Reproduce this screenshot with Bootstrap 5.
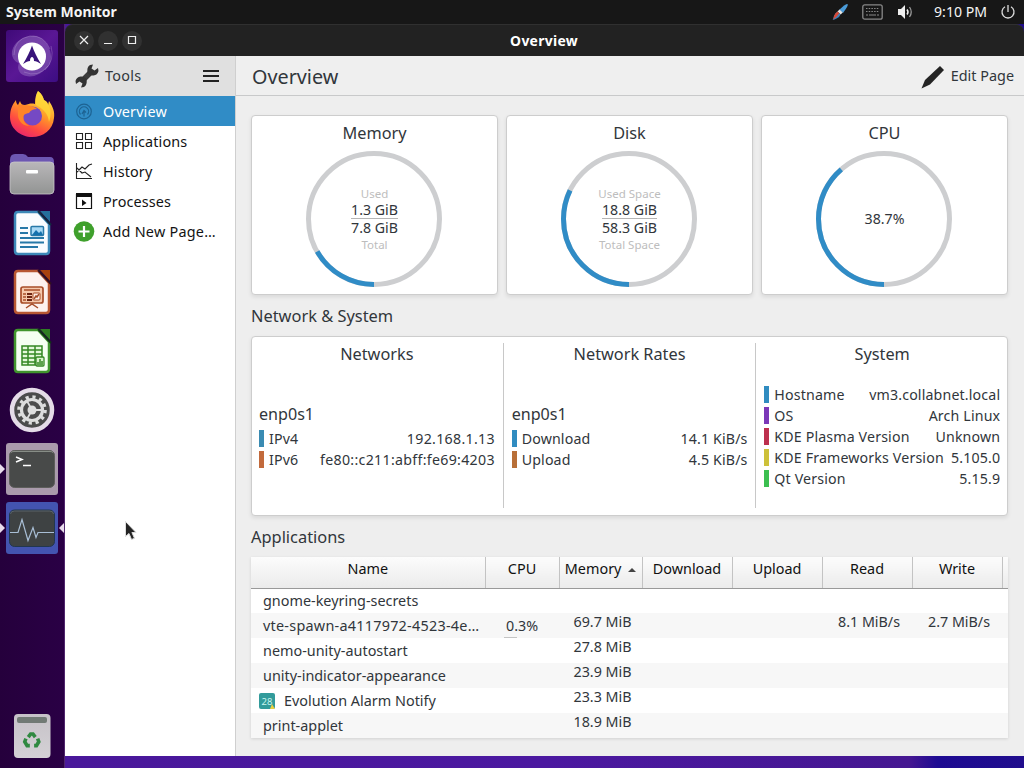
<!DOCTYPE html>
<html lang="en">
<head>
  <meta charset="UTF-8">
  <meta name="viewport" content="width=device-width, initial-scale=1.0">
  <title>System Monitor</title>
  <link href="https://cdn.jsdelivr.net/npm/bootstrap@5.3.3/dist/css/bootstrap.min.css" rel="stylesheet">
  <style>
    body {
      width: 1024px;
      height: 768px;
      overflow: hidden;
      background: #28003f;
      color: #31363b;
      font-family: "Noto Sans", "Open Sans", sans-serif;
      font-size: 14.4px;
      line-height: 20px;
    }

    svg { display: block; flex: none; }

    /* top panel */
    .panel {
      height: 24px;
      padding: 0 8px 0 6px;
      background: #171717;
      color: #f5f5f5;
    }
    .panel-title { font-size: 14px; font-weight: 700; }
    .tray-keys { margin: 0 14px 0 13px; }
    .clock { width: 73px; margin-right: 13px; font-size: 14.1px; text-align: right; }

    /* launcher */
    .launcher {
      width: 65px;
      height: 744px;
      padding: 6px 0 6px 6px;
      gap: 7px;
      background: linear-gradient(90deg, #25003c, #2a0045);
      border-right: 1px solid #50266d;
    }
    .tile {
      width: 52px;
      height: 52px;
      border-radius: 3px;
    }
    .tile-dash { background: linear-gradient(135deg, #3f0a78, #5a1795 50%, #3c0d82); }
    .tile-term { background: #aa9bac; }
    .tile-mon { background: #4354b0; }
    .pip-l, .pip-r {
      position: absolute;
      top: 21px;
      border: 5px solid transparent;
      width: 0;
      height: 0;
    }
    .pip-l { left: -6px; border-left-color: #e8dcec; border-right-width: 0; }
    .pip-r { right: -6px; border-right-color: #e8dcec; border-left-width: 0; }

    /* window */
    .win { width: 959px; height: 744px; background: linear-gradient(90deg, #49189a 0, #4b18a0 50%, #451791 88%, #1d0a92 91%, #200d8d); }
    .titlebar {
      height: 32px;
      background: #222;
      border-top: 1px solid #303030;
      border-radius: 8px 8px 0 0;
      color: #fff;
      font-size: 13.9px;
      font-weight: 700;
    }
    .win-btn {
      width: 20px;
      height: 20px;
      border-radius: 50%;
      background: #313131;
    }
    .win-name { padding-right: 78px; letter-spacing: .3px; }
    .win-body { height: 700px; background: #eee; }

    .side {
      width: 171px;
      flex: none;
      background: #fff;
      border-right: 1px solid #cfcfcf;
    }
    .side-head { height: 40px; background: #e0e0e0; padding: 0 15px 0 10px; }
    .side .list-group-item {
      height: 30px;
      padding: 1px 0 0 10px;
      gap: 10px;
      border: 0;
      color: #131313;
      background: #fff;
      letter-spacing: .14px;
    }
    .side .list-group-item.active { background: #308cc6; color: #fff; margin-top: 0; }
    .side .ico { width: 18px; display: flex; justify-content: center; }

    .page-head { height: 40px; padding: 2px 10px 0 16px; border-bottom: 1px solid #c8c9ca; background: #efefef; }
    .page-title { font-size: 19.8px; }
    .page-body { padding: 19px 16px 0 15px; }

    .box {
      background: #fff;
      border: 1px solid #cdcdcd;
      border-radius: 4px;
      box-shadow: 0 2px 4px rgba(0, 0, 0, .09);
      height: 180px;
    }
    .gauge-box { flex: 1 1 0; padding-top: 6px; }
    .box-title { font-size: 16.3px; line-height: 22px; text-align: center; }
    .gauge { width: 136px; height: 136px; margin: 7px 0 0 54px; }
    .gauge-text {
      position: absolute;
      inset: 0 0 0 1px;
      display: flex;
      flex-direction: column;
      align-items: center;
      justify-content: center;
      font-size: 14.2px;
      line-height: 18px;
    }
    .gauge-text .dim { font-size: 11.5px; line-height: 15px; color: #bdbdbd; }
    .gauge-text .over { border-bottom: 1px solid #b5b5b5; line-height: 17px; }

    .sec { margin: 10px 0 9px; font-size: 16.4px; line-height: 22px; }
    .net-box { padding: 6px 0 7px; }
    .net-col { flex: 1 1 0; min-width: 0; padding: 0 8px 0 7px; }
    .net-col + .net-col { border-left: 1px solid #c8c8c8; padding-left: 8px; }
    .net-col:last-child { padding-right: 7px; }
    .net-name { font-size: 16.1px; line-height: 22px; margin-bottom: 3px; }
    .net-line { height: 21px; white-space: nowrap; font-size: 14.2px; letter-spacing: .15px; }
    .net-val { letter-spacing: .15px; margin-right: -.2px; }
    .net-val.addr { letter-spacing: .3px; }
    .swatch { width: 5px; height: 17px; margin-right: 5px; }

    .apps {
      table-layout: fixed;
      width: 757px;
      margin: 0;
      color: #31363b;
      box-shadow: 0 1px 3px rgba(0, 0, 0, .12);
    }
    .apps th {
      height: 31px;
      padding: 0 0 7px;
      border: 0;
      border-right: 1px solid #c3c3c3;
      border-bottom: 1px solid #999;
      background: linear-gradient(#fcfcfc, #ebebeb);
      color: #111;
      font-weight: 400;
      text-align: center;
      vertical-align: middle;
      white-space: nowrap;
    }
    .apps th:last-child { border-right: 0; }
    .apps td {
      height: 25px;
      padding: 0 0 7px;
      border: 0;
      line-height: 18px;
      font-size: 14.3px;
      text-align: center;
      vertical-align: middle;
      white-space: nowrap;
      background: #fff;
    }
    .apps tr:nth-child(even) td { background: #f7f7f7; }
    .apps td:first-child { text-align: left; padding: 1px 0 0 12px; font-size: 14.4px; }
    .apps td:nth-child(2) { padding: 1px 0 0; }
    .apps .spark { background: linear-gradient(#c4c4c4, #c4c4c4) 19px 100% / 13px 1px no-repeat #f7f7f7 !important; }
    .sort-up { margin-left: 3px; }
    .spaced { letter-spacing: .25px; }

    .pointer { position: absolute; left: 124px; top: 520px; }
  </style>
</head>
<body>
  <header class="panel d-flex align-items-center">
    <div class="panel-title me-auto">System Monitor</div>
    <svg width="18" height="18" viewBox="0 0 18 18"><path d="M16.500 1q1.500 1-4.500 9L8 7q7-7 8.500-6z" fill="#4a9bd8"/><path d="M8.500 6.500l3.200 3-2 2-3.200-3z" fill="#e8e4e0"/><path d="M6.500 8.500l3 3q-1 3-4 4-2 1-4 1.500 1-1 1.500-4 1-3 3.500-4.500z" fill="#3f84bd"/><path d="M6.500 8.500l1.800 1.800Q6 14 2 16.500q.5-1 1-3.500 1-3 3.500-4.500z" fill="#d84a38"/></svg>
    <svg class="tray-keys" width="21" height="16" viewBox="0 0 21 16"><rect x=".8" y=".8" width="19.400" height="14.400" rx="2" fill="none" stroke="#888" stroke-width="1.300"/><path d="M4 4.500h13M4 7.500h13" stroke="#888" stroke-width="1.200" stroke-dasharray="1.500 1.200"/><path d="M4 11h2m1 0h7m1 0h2" stroke="#888" stroke-width="1.200"/></svg>
    <svg width="17" height="16" viewBox="0 0 17 16"><path d="M1 5h3l4-4v14l-4-4H1z" fill="#eee"/><path d="M10 5.500q2 2.500 0 5" fill="none" stroke="#eee" stroke-width="1.500"/><path d="M12.500 3q3.500 5 0 10" fill="none" stroke="#999" stroke-width="1.300"/></svg>
    <span class="clock">9:10 PM</span>
    <svg width="16" height="16" viewBox="0 0 16 16"><path d="M5 2.800a6 6 0 1 0 6 0M8 1v7" fill="none" stroke="#ddd" stroke-width="1.300"/></svg>
  </header>

  <div class="d-flex">
    <nav class="launcher d-flex flex-column">
      <div class="tile tile-dash">
        <svg width="52" height="52" viewBox="0 0 52 52">
          <g fill="#9f7bc9" opacity=".45"><ellipse cx="22" cy="20" rx="17" ry="13" transform="rotate(-30 22 20)"/><ellipse cx="31" cy="23" rx="13" ry="18" transform="rotate(-25 31 23)"/><ellipse cx="28" cy="33" rx="17" ry="12" transform="rotate(-30 28 33)"/></g>
          <g fill="none" stroke="#c9b0e2" opacity=".3"><path d="M8 25q0-16 16-19 14-1 20 13M45 16q4 14-6 24M42 36q-10 12-24 6"/></g>
          <circle cx="26" cy="26.500" r="14" fill="#fff"/>
          <path d="M26 15.500c2 6 5 12 9 18.500-3-2-5-3-7-3 0-3-1-4-2-4s-2 1-2 4c-2 0-4 1-7 3 4-6.500 7-12.500 9-18.500z" fill="#38137a"/>
        </svg>
      </div>
      <div class="tile">
        <svg width="52" height="52" viewBox="0 0 52 52">
          <defs>
            <linearGradient id="fox" x1=".8" y1="0" x2=".3" y2="1"><stop offset="0" stop-color="#fff04a"/><stop offset=".45" stop-color="#ff9a28"/><stop offset=".75" stop-color="#ff4b42"/><stop offset="1" stop-color="#e8256c"/></linearGradient>
          </defs>
          <path d="M32 2c4 3 5 6 6 9 3 1 4 3 4 5l1-4c4 6 6 11 5 17-1 12-11 19-22 19S4 40 4 28c0-7 2-12 6-17 0 3 1 4 2 5l2-4c1 3 2 4 5 4 4-1 6-2 10-1 0-6 1-10 3-13z" fill="url(#fox)"/>
          <path d="M32 2c4 3 5 6 6 9 7 5 8 14 5 22-1-9-6-13-13-17-1-5 0-10 2-14z" fill="#ffd938" opacity=".75"/>
          <circle cx="26.500" cy="27" r="9.500" fill="#7549c4"/>
          <path d="M12 16c7 0 15 0 19 4-4 0-6 1-8 4-2 0-4 1-5 2-2 5 1 9 6 11-7 0-11-4-12-10 0-4 0-8 0-11z" fill="#ff8429"/>
        </svg>
      </div>
      <div class="tile">
        <svg width="52" height="52" viewBox="0 0 52 52">
          <path d="M4 12q0-6 5-6h8q3 0 5 3h22q4 0 4 5v8H4z" fill="#6d57b2"/>
          <defs><linearGradient id="dir" x2="0" y2="1"><stop offset="0" stop-color="#b9b7b9"/><stop offset="1" stop-color="#929493"/></linearGradient></defs>
          <rect x="4" y="14" width="44" height="32" rx="4" fill="url(#dir)" stroke="#c9c6ca" stroke-width=".8"/>
          <rect x="20" y="22" width="12" height="3.500" rx="1" fill="#fff"/>
        </svg>
      </div>
      <div class="tile">
        <svg width="52" height="52" viewBox="0 0 52 52">
          <path d="M12 5h20l11 12v27q0 3-3 3H12q-3 0-3-3V8q0-3 3-3z" fill="#fafcff" stroke="#3c88b8" stroke-width="2.500"/>
          <path d="M34 4h10v11z" fill="#256f9b"/><path d="M32 4l13 14" stroke="#142a40" stroke-width="2"/>
          <path d="M14 21h8m-8 5h8m-8 5h24m-24 4.500h24m-24 4.500h18" stroke="#2778a8" stroke-width="1.800"/>
          <rect x="25" y="19.500" width="12.500" height="9" rx="1" fill="#a8d8f5" stroke="#2778a8" stroke-width="1.500"/><path d="M26 28l4-5 3 3 2-2 2 4z" fill="#1671ad"/>
        </svg>
      </div>
      <div class="tile">
        <svg width="52" height="52" viewBox="0 0 52 52">
          <path d="M12 5h20l11 12v27q0 3-3 3H12q-3 0-3-3V8q0-3 3-3z" fill="#fdf2ef" stroke="#b85732" stroke-width="2.500"/>
          <path d="M34 4h10v11z" fill="#a8420e"/><path d="M32 4l13 14" stroke="#311022" stroke-width="2"/>
          <rect x="15" y="21" width="22" height="16" rx="2" fill="#f5c8ac" stroke="#a84d29" stroke-width="1.700"/>
          <path d="M18 24h16M17 28h3m-3 3h3m-3 3h3" stroke="#a84d29" stroke-width="1.300"/><path d="M21 28h5m-5 3h5m-5 3h5" stroke="#6d2412" stroke-width="2"/>
          <rect x="27" y="27" width="7" height="7" rx="1" fill="#fff1e9" stroke="#a84d29"/><path d="M28 33l2-3 1 1 2-3M20 42l6-4 6 4" fill="none" stroke="#a84d29" stroke-width="1.500"/>
        </svg>
      </div>
      <div class="tile">
        <svg width="52" height="52" viewBox="0 0 52 52">
          <path d="M12 5h20l11 12v27q0 3-3 3H12q-3 0-3-3V8q0-3 3-3z" fill="#f5fff2" stroke="#40952d" stroke-width="2.500"/>
          <path d="M34 4h10v11z" fill="#2f7e23"/><path d="M32 4l13 14" stroke="#12301b" stroke-width="2"/>
          <path d="M16 21h20v19H16zm0 4h20m-20 4h20m-20 4h20m-20 4h20M22 21v19m7-19v19" fill="#e4f8db" stroke="#348825" stroke-width="1.500"/>
          <rect x="30" y="32" width="8" height="9" rx="1" fill="#d8f2cb" stroke="#348825" stroke-width="1.300"/><path d="M32 40v-3m2 3v-6m2 6v-4" stroke="#348825" stroke-width="1.500"/>
        </svg>
      </div>
      <div class="tile">
        <svg width="52" height="52" viewBox="0 0 52 52">
          <circle cx="26" cy="26" r="20" fill="#4b4b4b" stroke="#e5dce8" stroke-width="4.500"/>
          <circle cx="26" cy="26" r="13.200" fill="none" stroke="#ddd" stroke-width="3.200" stroke-dasharray="3.200 3.712"/>
          <circle cx="26" cy="26" r="10.500" fill="none" stroke="#ddd" stroke-width="3.200"/>
          <path d="M26 26h10M26 26l-5-9M26 26l-5 9" stroke="#ddd" stroke-width="1.800"/><circle cx="26" cy="26" r="4.500" fill="#ddd"/>
        </svg>
      </div>
      <div class="tile tile-term position-relative">
        <i class="pip-l"></i>
        <svg width="52" height="52" viewBox="0 0 52 52">
          <rect x="3.500" y="7.500" width="45" height="37" rx="5" fill="#484a49" stroke="#5d5e5b"/>
          <path d="M5 9.500q1-1 3-1h36q2 0 3 1" fill="none" stroke="#a4aaa0" stroke-width=".7"/>
          <path d="M10 14l6 2.500-6 2.500" fill="none" stroke="#fff" stroke-width="1.500"/><path d="M17 22.500h8" stroke="#fff" stroke-width="1.500"/>
        </svg>
      </div>
      <div class="tile tile-mon position-relative">
        <i class="pip-l"></i><i class="pip-r"></i>
        <svg width="52" height="52" viewBox="0 0 52 52">
          <rect x="3.500" y="8" width="45" height="36.500" rx="5" fill="#3e4243" stroke="#22374f"/>
          <path d="M4.500 12q0-3 4-3h35q4 0 4 3" fill="none" stroke="#67717a" stroke-width=".7"/>
          <path d="M4 30.500h8l4-13 6 21 5-13 3 10 2-5h16" fill="none" stroke="#a8bed5" stroke-width="1.200"/>
        </svg>
      </div>
      <div class="tile mt-auto">
        <svg width="52" height="52" viewBox="0 0 52 52">
          <defs><linearGradient id="bin" x2="0" y2="1"><stop offset="0" stop-color="#c6c2c8"/><stop offset="1" stop-color="#d4d1d5"/></linearGradient></defs>
          <rect x="8" y="4" width="36.500" height="44" rx="4" fill="url(#bin)"/>
          <rect x="11" y="7" width="30" height="6" rx="2" fill="#717a75"/>
          <g fill="none" stroke="#2f8940" stroke-width="4.600" transform="translate(5.500 6) scale(.78)"><path d="M21.500 27l3-4h3l3 4"/><path d="M33.500 29l1.500 4-3 5h-3"/><path d="M23.500 38H20l-3-5 1.500-4"/></g>
        </svg>
      </div>
    </nav>

    <main class="win">
      <div class="titlebar d-flex align-items-center">
        <div class="d-flex gap-1" style="padding-left:9px">
          <span class="win-btn"><svg width="20" height="20"><path d="M6 5l8 8m0-8l-8 8" stroke="#eee" stroke-width="1.200"/></svg></span>
          <span class="win-btn"><svg width="20" height="20"><path d="M6 12.500h8" stroke="#eee"/></svg></span>
          <span class="win-btn"><svg width="20" height="20"><path d="M6.500 5.500h7v7h-7z" fill="none" stroke="#eee" stroke-width="1.200"/></svg></span>
        </div>
        <div class="win-name flex-grow-1 text-center">Overview</div>
      </div>

      <div class="win-body d-flex">
        <aside class="side">
          <div class="side-head d-flex align-items-center">
            <svg width="24" height="24" viewBox="0 0 24 24"><path d="M8 16L16 8" stroke="#3b3b3b" stroke-width="5.500"/><path d="M15 1l3-.5-1.500 4 3 2L23 4l.5 3q-1 4-5 4.500-4 .5-6-2.500-1-6 2.500-8zM9 23l-3 .5 1.500-4-3-2L1 20l-.5-3q1-4 5-4.500 4-.5 6 2.500 1 6-2.500 8z" fill="#333"/></svg>
            <span class="me-auto" style="padding-left:6px;letter-spacing:.3px">Tools</span>
            <svg width="18" height="14"><path d="M1 2h16M1 7h16M1 12h16" stroke="#222" stroke-width="1.800"/></svg>
          </div>
          <div class="list-group list-group-flush" id="pages"></div>
        </aside>

        <section class="flex-grow-1">
          <div class="page-head d-flex align-items-center">
            <span class="page-title me-auto">Overview</span>
            <svg width="26" height="26" viewBox="0 0 26 26"><path d="M1.500 24.500L5 16 20 2l4 4L10 20.500z" fill="#242424"/></svg>
            <span style="padding:0 0 1px 5px">Edit Page</span>
          </div>

          <div class="page-body">
            <div class="d-flex gap-2" id="gauges"></div>

            <div class="sec">Network &amp; System</div>
            <div class="box net-box d-flex" id="network"></div>

            <div class="sec">Applications</div>
            <table class="table apps">
              <colgroup>
                <col style="width:234px"><col style="width:74px"><col style="width:83px"><col style="width:90px"><col style="width:90px"><col style="width:90px"><col style="width:90px"><col style="width:6px">
              </colgroup>
              <thead>
                <tr>
                  <th>Name</th><th>CPU</th>
                  <th>Memory <svg class="d-inline sort-up" width="8" height="5"><path d="M0 5L4 1l4 4z" fill="#444"/></svg></th>
                  <th>Download</th><th>Upload</th><th>Read</th><th>Write</th><th></th>
                </tr>
              </thead>
              <tbody id="apps"></tbody>
            </table>
          </div>
        </section>
      </div>
    </main>
  </div>

  <svg class="pointer" width="14" height="22" viewBox="0 0 14 22"><path d="M1.500 1.500v15l3.500-3 2.500 6 3-1.200-2.600-5.800H12z" fill="#242424" stroke="#ddd"/></svg>

  <script src="https://cdn.jsdelivr.net/npm/bootstrap@5.3.3/dist/js/bootstrap.bundle.min.js"></script>
  <script>
    const pages = [
      ['Overview', '<circle cx="9" cy="8.500" r="7.300" fill="none" stroke="#1d6393" stroke-width="1.200"/><path d="M5.500 11.500a4.600 4.600 0 1 1 7 0M9 13.500v-6M7 11l2-3.500 2 2" fill="none" stroke="#1d6393" stroke-width="1.200"/>'],
      ['Applications', '<path d="M1.500.5h6v6h-6zm9 0h6v6h-6zm-9 9h6v6h-6zm9 0h6v6h-6z" fill="none" stroke="#222" stroke-width="1.100"/>'],
      ['History', '<path d="M1.500 0v15.500H17M2 9l5-5 3 2 4-4 3-1M2 5l5 5 3-1 6 5" fill="none" stroke="#222" stroke-width="1.100"/>'],
      ['Processes', '<path d="M1.500 1.500h15v14h-15z" fill="none" stroke="#111" stroke-width="1.200"/><path d="M1 0h16v4H1zM7 6.500l4.500 3.500L7 13z" fill="#111"/>'],
      ['Add New Page…', '<circle cx="9" cy="8.500" r="10.300" fill="#3fa02c"/><path d="M9 3v11M3.500 8.500h11" stroke="#fff" stroke-width="2.200"/>']
    ];
    document.getElementById('pages').innerHTML = pages.map((p, i) => `
      <a class="list-group-item d-flex align-items-center ${i === 0 ? 'active' : ''}">
        <span class="ico"><svg width="18" height="18" overflow="visible">${p[1]}</svg></span><span class="${i === 4 ? 'spaced' : ''}">${p[0]}</span>
      </a>`).join('');

    const gauges = [
      { title: 'Memory', pct: 16.7, rows: ['Used', '1.3 GiB', '7.8 GiB', 'Total'] },
      { title: 'Disk', pct: 32.2, rows: ['Used Space', '18.8 GiB', '58.3 GiB', 'Total Space'] },
      { title: 'CPU', pct: 38.7, rows: null }
    ];
    document.getElementById('gauges').innerHTML = gauges.map(g => `
      <div class="box gauge-box">
        <div class="box-title">${g.title}</div>
        <div class="gauge position-relative">
          <svg width="136" height="136">
            <g fill="none" stroke-width="5" transform="rotate(90 68 68)">
              <circle cx="68" cy="68" r="65.500" stroke="#cdced0"/>
              <circle cx="68" cy="68" r="65.500" stroke="#308cc6" pathLength="100" stroke-dasharray="${g.pct} 100"/>
            </g>
          </svg>
          <div class="gauge-text">${g.rows
            ? `<span class="dim">${g.rows[0]}</span><span class="over">${g.rows[1]}</span><span>${g.rows[2]}</span><span class="dim">${g.rows[3]}</span>`
            : `<span>${g.pct}%</span>`}</div>
        </div>
      </div>`).join('');

    const network = [
      { title: 'Networks', name: 'enp0s1', lines: [['#3a8bb2', 'IPv4', '192.168.1.13'], ['#c26a3c', 'IPv6', 'fe80::c211:abff:fe69:4203']] },
      { title: 'Network Rates', name: 'enp0s1', lines: [['#308cc0', 'Download', '14.1 KiB/s'], ['#b86f38', 'Upload', '4.5 KiB/s']] },
      { title: 'System', lines: [['#308cc0', 'Hostname', 'vm3.collabnet.local'], ['#7b38b8', 'OS', 'Arch Linux'], ['#bd304e', 'KDE Plasma Version', 'Unknown'], ['#cdc13a', 'KDE Frameworks Version', '5.105.0'], ['#3cbf50', 'Qt Version', '5.15.9']] }
    ];
    document.getElementById('network').innerHTML = network.map(n => `
      <div class="net-col d-flex flex-column">
        <div class="box-title">${n.title}</div>
        <div class="my-auto">
          ${n.name ? `<div class="net-name">${n.name}</div>` : ''}
          ${n.lines.map(l => `
            <div class="net-line d-flex align-items-center">
              <span class="swatch" style="background:${l[0]}"></span><span>${l[1]}</span><span class="net-val ms-auto ${l[1].startsWith('IP') ? 'addr' : ''}">${l[2]}</span>
            </div>`).join('')}
        </div>
      </div>`).join('');

    const alarm = '<svg class="d-inline align-middle" style="margin:-2px 9px 0 -4px" width="16" height="16"><rect width="16" height="16" rx="2" fill="#329b9b"/><text x="2.500" y="11.500" font-size="9.500" fill="#c8f5ee">28</text><path d="M11 16l2-5 3 5z" fill="#e8d042"/></svg>';
    const apps = [
      ['gnome-keyring-secrets', '', '', '', ''],
      ['<span class="spaced">vte-spawn-a4117972-4523-4e…</span>', '0.3%', '69.7 MiB', '8.1 MiB/s', '2.7 MiB/s'],
      ['nemo-unity-autostart', '', '27.8 MiB', '', ''],
      ['unity-indicator-appearance', '', '23.9 MiB', '', ''],
      [alarm + 'Evolution Alarm Notify', '', '23.3 MiB', '', ''],
      ['print-applet', '', '18.9 MiB', '', '']
    ];
    document.getElementById('apps').innerHTML = apps.map(a =>
      `<tr><td>${a[0]}</td><td class="${a[1] ? 'spark' : ''}">${a[1]}</td><td class="ps-1">${a[2]}</td><td></td><td></td><td class="ps-1">${a[3]}</td><td class="ps-1">${a[4]}</td><td></td></tr>`
    ).join('');
  </script>
</body>
</html>
